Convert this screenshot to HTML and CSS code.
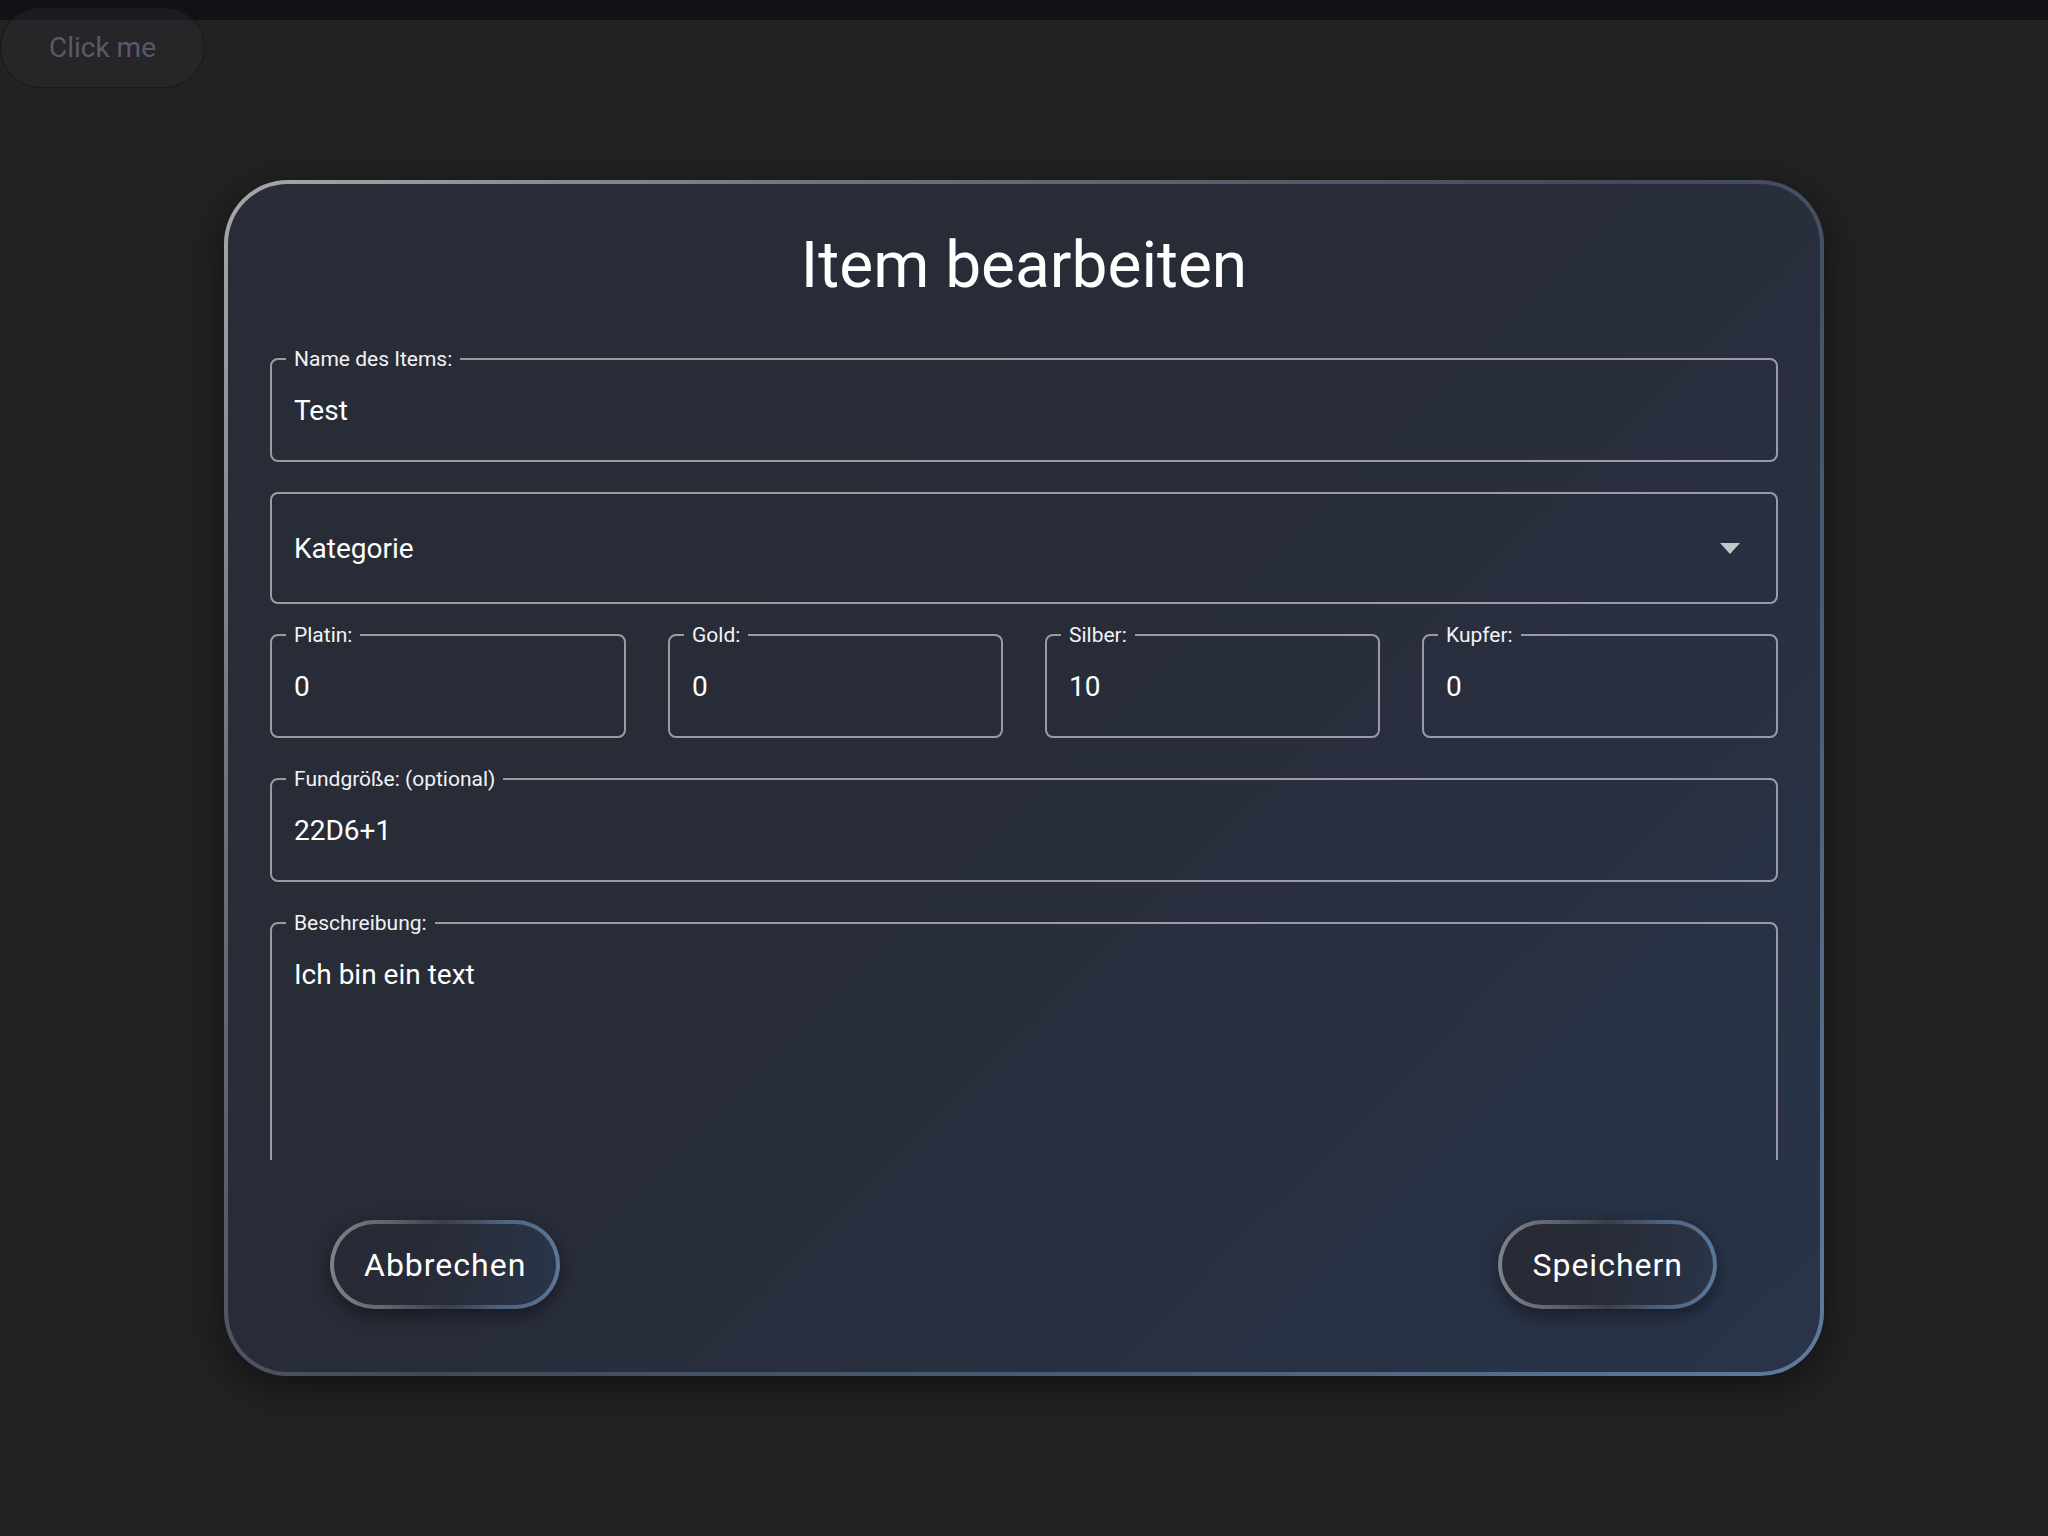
FILE: index.html
```html
<!DOCTYPE html>
<html lang="de">
<head>
<meta charset="utf-8">
<title>Item bearbeiten</title>
<link rel="stylesheet" href="styles.css">
</head>
<body>
<div class="topbar"></div>
<button class="click-btn" type="button">Click me</button>
<main class="stage">
  <section class="dialog">
    <h1 class="dialog-title">Item bearbeiten</h1>
    <form class="form-scroll">
      <fieldset class="field field-name">
        <legend>Name des Items:</legend>
        <input class="field-input" type="text" value="Test">
      </fieldset>

      <div class="select-field">
        <span class="select-text">Kategorie</span>
        <svg class="select-arrow" width="20" height="11" viewBox="0 0 20 11"><polygon points="0,0 20,0 10,11" fill="#c6c6cd"/></svg>
      </div>

      <div class="money-row">
        <fieldset class="field">
          <legend>Platin:</legend>
          <input class="field-input" type="text" value="0">
        </fieldset>
        <fieldset class="field">
          <legend>Gold:</legend>
          <input class="field-input" type="text" value="0">
        </fieldset>
        <fieldset class="field">
          <legend>Silber:</legend>
          <input class="field-input" type="text" value="10">
        </fieldset>
        <fieldset class="field">
          <legend>Kupfer:</legend>
          <input class="field-input" type="text" value="0">
        </fieldset>
      </div>

      <fieldset class="field field-fund">
        <legend>Fundgröße: (optional)</legend>
        <input class="field-input" type="text" value="22D6+1">
      </fieldset>

      <fieldset class="field field-desc">
        <legend>Beschreibung:</legend>
        <textarea class="field-input field-textarea">Ich bin ein text</textarea>
      </fieldset>
    </form>
    <div class="dialog-actions">
      <button class="pill-btn" type="button">Abbrechen</button>
      <button class="pill-btn" type="button">Speichern</button>
    </div>
  </section>
</main>
</body>
</html>
```

FILE: styles.css
```css
html, body {
  margin: 0;
  padding: 0;
}

body {
  background: #222222;
  font-family: Roboto, "Noto Sans", "Liberation Sans", sans-serif;
  color: #ffffff;
  min-height: 1536px;
  position: relative;
}

.topbar {
  height: 20px;
  background: #121117;
}

.click-btn {
  position: absolute;
  top: 7px;
  left: 0;
  width: 205px;
  height: 81px;
  border-radius: 41px;
  border: 1px solid rgba(0, 0, 0, 0.35);
  background: rgba(45, 44, 50, 0.375);
  color: #5c586c;
  font-family: Roboto, "Liberation Sans", sans-serif;
  font-size: 28px;
  padding: 0;
  cursor: pointer;
}

.stage {
  padding-top: 160px;
  display: flex;
  justify-content: center;
}

.dialog {
  width: 1600px;
  box-sizing: border-box;
  border: 4px solid transparent;
  border-radius: 64px;
  background:
    linear-gradient(135deg, #292c37 0%, #282c38 45%, #29344a 100%) padding-box,
    linear-gradient(135deg, #a6a9ab 0%, #6e737a 22%, #414a5a 50%, #4c5d75 75%, #5e7b9e 100%) border-box;
  box-shadow: 0 10px 40px rgba(0, 0, 0, 0.5);
  padding: 44px 42px 63px;
  display: flex;
  flex-direction: column;
}

.dialog-title {
  margin: 0;
  font-size: 64px;
  line-height: 75px;
  font-weight: 400;
  text-align: center;
  color: #ffffff;
}

.form-scroll {
  margin-top: 44px;
  height: 813px;
  overflow-y: auto;
  scrollbar-width: none;
  display: flex;
  flex-direction: column;
}

.field {
  margin: 0;
  padding: 23px 14px 32px;
  border: 2px solid #9b99a3;
  border-radius: 8px;
  min-width: 0;
  box-sizing: border-box;
}

.field legend {
  padding: 0 8px;
  font-size: 21px;
  line-height: 24px;
  color: #f2f2f4;
}

.field-input {
  display: block;
  width: 100%;
  box-sizing: border-box;
  height: 34px;
  padding: 0 8px;
  margin: 0;
  border: none;
  outline: none;
  background: transparent;
  color: #ffffff;
  font-family: Roboto, "Liberation Sans", sans-serif;
  font-size: 28px;
  line-height: 34px;
}

.field-textarea {
  height: 320px;
  resize: none;
  overflow: hidden;
}

.field-name {
  flex: none;
  margin-bottom: 30px;
}

.select-field {
  flex: none;
  height: 112px;
  box-sizing: border-box;
  border: 2px solid #9b99a3;
  border-radius: 8px;
  padding: 0 36px 0 22px;
  display: flex;
  align-items: center;
  justify-content: space-between;
  margin-bottom: 19px;
}

.select-text {
  font-size: 28px;
  color: #ffffff;
}

.select-arrow {
  display: block;
  margin-top: 1px;
}

.money-row {
  flex: none;
  display: grid;
  grid-template-columns: 356fr 335fr 335fr 356fr;
  column-gap: 42px;
  margin-bottom: 29px;
}

.field-fund {
  flex: none;
  margin-bottom: 29px;
}

.field-desc {
  flex: none;
}

.dialog-actions {
  margin-top: 60px;
  padding: 0 61px 0 60px;
  display: flex;
  justify-content: space-between;
}

.pill-btn {
  height: 89px;
  box-sizing: border-box;
  padding: 0 30px;
  border: 4px solid transparent;
  border-radius: 45px;
  background:
    linear-gradient(100deg, #272a34 0%, #282c38 50%, #2a3549 100%) padding-box,
    linear-gradient(90deg, #7e8289 0%, #60646c 25%, #3a3e48 50%, #4d6280 75%, #5d7797 100%) border-box;
  box-shadow: 0 6px 18px rgba(0, 0, 0, 0.45);
  color: #ffffff;
  font-family: Roboto, "Liberation Sans", sans-serif;
  font-size: 32px;
  letter-spacing: 1px;
  cursor: pointer;
}
```
